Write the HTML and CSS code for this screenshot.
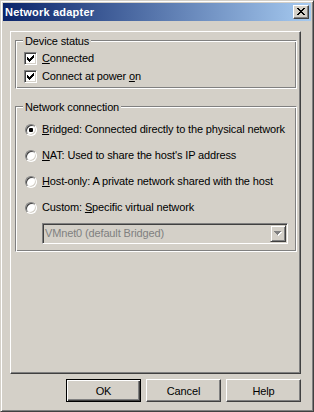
FILE: index.html
```html
<!DOCTYPE html>
<html>
<head>
  <title>Network adapter</title>
  <link rel="stylesheet" href="styles.css">
</head>
<body>
  <div class="window">
    <div class="titlebar">
      <span class="title">Network adapter</span>
      <span class="close">
        <svg width="8" height="7" viewBox="0 0 8 7" shape-rendering="crispEdges"><path fill="#000" d="M0 0h2v1H0zM6 0h2v1H6zM1 1h2v1H1zM5 1h2v1H5zM2 2h4v1H2zM3 3h2v1H3zM2 4h4v1H2zM1 5h2v1H1zM5 5h2v1H5zM0 6h2v1H0zM6 6h2v1H6z"/></svg>
      </span>
    </div>

    <div class="panel">
      <div class="group group-device">
        <div class="group-title">Device status</div>
        <div class="row row-first">
          <span class="checkbox">
            <svg width="7" height="7" viewBox="0 0 7 7" shape-rendering="crispEdges"><path fill="#000" d="M6 0h1v1H6zM5 1h2v1H5zM0 2h1v1H0zM4 2h3v1H4zM0 3h2v1H0zM3 3h3v1H3zM0 4h5v1H0zM1 5h3v1H1zM2 6h1v1H2z"/></svg>
          </span>
          <span><u>C</u>onnected</span>
        </div>
        <div class="row row-next">
          <span class="checkbox">
            <svg width="7" height="7" viewBox="0 0 7 7" shape-rendering="crispEdges"><path fill="#000" d="M6 0h1v1H6zM5 1h2v1H5zM0 2h1v1H0zM4 2h3v1H4zM0 3h2v1H0zM3 3h3v1H3zM0 4h5v1H0zM1 5h3v1H1zM2 6h1v1H2z"/></svg>
          </span>
          <span>Connect at power <u>o</u>n</span>
        </div>
      </div>

      <div class="group group-network">
        <div class="group-title">Network connection</div>
        <div class="row radio-row radio-first">
          <span class="radio"><span class="dot"></span></span>
          <span><u>B</u>ridged: Connected directly to the physical network</span>
        </div>
        <div class="row radio-row">
          <span class="radio"></span>
          <span><u>N</u>AT: Used to share the host's IP address</span>
        </div>
        <div class="row radio-row">
          <span class="radio"></span>
          <span><u>H</u>ost-only: A private network shared with the host</span>
        </div>
        <div class="row radio-row">
          <span class="radio"></span>
          <span>Custom: <u>S</u>pecific virtual network</span>
        </div>
        <div class="select">
          <span class="select-text">VMnet0 (default Bridged)</span>
          <span class="select-btn">
            <svg width="8" height="5" viewBox="0 0 8 5" shape-rendering="crispEdges">
              <path fill="#fff" d="M1 1h7v1H1zM2 2h5v1H2zM3 3h3v1H3zM4 4h1v1H4z"/>
              <path fill="#808080" d="M0 0h7v1H0zM1 1h5v1H1zM2 2h3v1H2zM3 3h1v1H3z"/>
            </svg>
          </span>
        </div>
      </div>
    </div>

    <div class="buttons">
      <button class="btn btn-default">OK</button>
      <button class="btn">Cancel</button>
      <button class="btn">Help</button>
    </div>
  </div>
</body>
</html>
```

FILE: styles.css
```css
body {
  margin: 0;
  font-family: "Liberation Sans", Arial, sans-serif;
  font-size: 11px;
  letter-spacing: -0.14px;
  color: #000;
  background-color: #d4d0c8;
}

.window {
  width: 314px;
  height: 412px;
  box-sizing: border-box;
  padding: 2px;
  background-color: #d4d0c8;
  border: 1px solid;
  border-color: #d4d0c8 #404040 #404040 #d4d0c8;
  box-shadow: inset 1px 1px #fff, inset -1px -1px #808080;
}

.titlebar {
  height: 18px;
  display: flex;
  align-items: center;
  justify-content: space-between;
  padding: 0 2px;
  background: linear-gradient(to right, #0a246a, #a6caf0);
}

.title {
  color: #fff;
  font-weight: bold;
  letter-spacing: 0.2px;
  line-height: 18px;
}

.close {
  width: 16px;
  height: 14px;
  box-sizing: border-box;
  background-color: #d4d0c8;
  border: 1px solid;
  border-color: #fff #404040 #404040 #fff;
  box-shadow: inset -1px -1px #808080;
}

.close svg {
  display: block;
  margin: 2px 0 0 3px;
}

.panel {
  width: 291px;
  height: 343px;
  box-sizing: border-box;
  margin: 10px 0 0 7px;
  padding: 8px 0 0 4px;
  border: 1px solid;
  border-color: #fff #404040 #404040 #fff;
  box-shadow: inset -1px -1px #808080;
}

.group {
  width: 282px;
  box-sizing: border-box;
  padding: 0 0 5px 8px;
  border: 1px solid;
  border-color: #808080 #fff #fff #808080;
  box-shadow: inset 1px 1px #fff, inset -1px -1px #808080;
}

.group-network {
  margin-top: 17px;
  padding-bottom: 7px;
}

.group-title {
  width: fit-content;
  margin: -6px 0 0 -1px;
  padding: 0 2px;
  line-height: 13px;
  background-color: #d4d0c8;
}

.row {
  display: flex;
  align-items: center;
  gap: 5px;
  height: 13px;
  line-height: 13px;
  white-space: nowrap;
}

.row-first {
  margin-top: 4px;
}

.row-next {
  margin-top: 5px;
}

.checkbox {
  width: 13px;
  height: 13px;
  box-sizing: border-box;
  display: flex;
  align-items: center;
  justify-content: center;
  background-color: #fff;
  border: 1px solid;
  border-color: #808080 #fff #fff #808080;
  box-shadow: inset 1px 1px #404040, inset -1px -1px #d4d0c8;
}

.radio-row {
  margin-top: 13px;
  margin-left: 1px;
}

.radio-first {
  margin-top: 9px;
}

.radio {
  width: 12px;
  height: 12px;
  box-sizing: border-box;
  display: flex;
  align-items: center;
  justify-content: center;
  border-radius: 50%;
  background-color: #fff;
  border: 1px solid;
  border-color: #808080 #fff #fff #808080;
  box-shadow: inset 1px 1px #404040, inset -1px -1px #d4d0c8;
}

.dot {
  width: 4px;
  height: 4px;
  border-radius: 1px;
  background-color: #000;
}

.select {
  width: 246px;
  height: 21px;
  box-sizing: border-box;
  margin: 9px 0 0 18px;
  padding: 1px;
  display: flex;
  border: 1px solid;
  border-color: #808080 #fff #fff #808080;
  box-shadow: inset 1px 1px #404040, inset -1px -1px #d4d0c8;
}

.select-text {
  flex: 1;
  padding-left: 1px;
  line-height: 17px;
  color: #808080;
}

.select-btn {
  width: 16px;
  box-sizing: border-box;
  display: flex;
  align-items: center;
  justify-content: center;
  border: 1px solid;
  border-color: #d4d0c8 #404040 #404040 #d4d0c8;
  box-shadow: inset 1px 1px #fff, inset -1px -1px #808080;
}

.buttons {
  display: flex;
  gap: 5px;
  margin: 5px 0 0 63px;
}

.btn {
  width: 75px;
  height: 23px;
  box-sizing: border-box;
  padding: 0;
  font: inherit;
  letter-spacing: inherit;
  color: #000;
  background-color: #d4d0c8;
  border: 1px solid;
  border-color: #fff #404040 #404040 #fff;
  box-shadow: inset -1px -1px #808080;
}

.btn-default {
  border-color: #000;
  box-shadow: inset 1px 1px #fff, inset -1px -1px #404040, inset -2px -2px #808080;
}
```
